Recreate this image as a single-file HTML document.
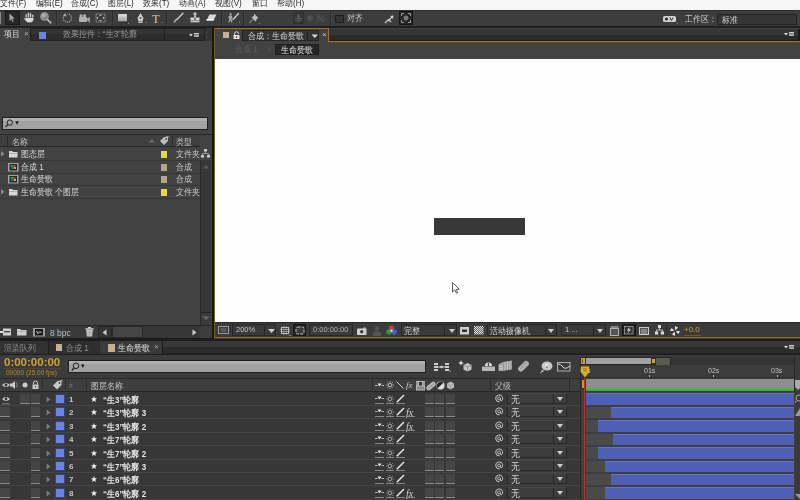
<!DOCTYPE html>
<html><head><meta charset="utf-8">
<style>
*{margin:0;padding:0;box-sizing:border-box}
html,body{width:800px;height:500px;overflow:hidden;background:#1c1c1c;font-family:"Liberation Sans",sans-serif;font-size:8px;color:#c8c8c8}
.a{position:absolute}
.t{position:absolute;white-space:nowrap;line-height:8px;will-change:transform}
svg{position:absolute;overflow:visible}
</style></head><body>
<div class="a" style="left:0px;top:0px;width:800px;height:10px;background:#f6f6f6;"></div>
<div class="t" style="left:0px;top:-1px;font-size:8px;color:#2a2a2a;transform:scaleY(1.14);transform-origin:0 0;">文件(F)</div>
<div class="t" style="left:36px;top:-1px;font-size:8px;color:#2a2a2a;transform:scaleY(1.14);transform-origin:0 0;">编辑(E)</div>
<div class="t" style="left:71px;top:-1px;font-size:8px;color:#2a2a2a;transform:scaleY(1.14);transform-origin:0 0;">合成(C)</div>
<div class="t" style="left:108px;top:-1px;font-size:8px;color:#2a2a2a;transform:scaleY(1.14);transform-origin:0 0;">图层(L)</div>
<div class="t" style="left:143px;top:-1px;font-size:8px;color:#2a2a2a;transform:scaleY(1.14);transform-origin:0 0;">效果(T)</div>
<div class="t" style="left:179px;top:-1px;font-size:8px;color:#2a2a2a;transform:scaleY(1.14);transform-origin:0 0;">动画(A)</div>
<div class="t" style="left:215px;top:-1px;font-size:8px;color:#2a2a2a;transform:scaleY(1.14);transform-origin:0 0;">视图(V)</div>
<div class="t" style="left:252px;top:-1px;font-size:8px;color:#2a2a2a;transform:scaleY(1.14);transform-origin:0 0;">窗口</div>
<div class="t" style="left:277px;top:-1px;font-size:8px;color:#2a2a2a;transform:scaleY(1.14);transform-origin:0 0;">帮助(H)</div>
<div class="a" style="left:0px;top:10px;width:800px;height:16px;background:#3d3d3d;"></div>
<div class="a" style="left:0px;top:10px;width:800px;height:1px;background:#2c2c2c;"></div>
<div class="a" style="left:0px;top:26px;width:800px;height:2px;background:#1f1f1f;"></div>
<div class="a" style="left:0px;top:12px;width:1px;height:12px;background:#8a8a8a;"></div>
<div class="a" style="left:5px;top:11px;width:15px;height:14px;background:#262626;border:1px solid #1a1a1a"></div>
<svg style="left:9px;top:13px;" width="6" height="10" viewBox="0 0 6 10"><path d="M0.5 0.5 L0.5 8 L2.2 6.3 L3.6 9.3 L4.6 8.8 L3.3 5.8 L5.6 5.6 Z" fill="#a8a8a8"/></svg>
<svg style="left:23px;top:12px;" width="12" height="11" viewBox="0 0 12 11"><g fill="#dcdcdc" stroke="#1e1e1e" stroke-width="0.5"><rect x="2.2" y="1.8" width="2" height="6" rx="1"/><rect x="4.4" y="0.4" width="2" height="7" rx="1"/><rect x="6.6" y="0.8" width="2" height="7" rx="1"/><rect x="8.8" y="2.2" width="2" height="6" rx="1"/><path d="M0.3 5.8 Q1.2 5 2.4 6.5 L2.4 5.5 L10.8 5.5 L10.8 7.5 Q10.5 10.5 7 10.8 L5 10.8 Q3 10.5 0.3 5.8Z"/></g></svg>
<svg style="left:40px;top:12px;" width="12" height="12" viewBox="0 0 12 12"><defs><radialGradient id="mg" cx="0.4" cy="0.35" r="0.7"><stop offset="0" stop-color="#bdbdbd"/><stop offset="1" stop-color="#5e5e5e"/></radialGradient></defs><circle cx="4.5" cy="4.5" r="3.7" fill="url(#mg)" stroke="#a8a8a8" stroke-width="1.1"/><path d="M7.3 7.3 L10.8 10.8" stroke="#b8b8b8" stroke-width="1.7" stroke-linecap="round"/></svg>
<div class="a" style="left:56px;top:11px;width:1px;height:14px;background:#2a2a2a;"></div>
<div class="a" style="left:57px;top:11px;width:1px;height:14px;background:#444;"></div>
<svg style="left:62px;top:13px;" width="11" height="10" viewBox="0 0 11 10"><path d="M2 2.5 A4.2 4.2 0 1 0 5.5 0.8" fill="none" stroke="#9a9a9a" stroke-width="1.2" stroke-dasharray="1.3 0.8"/><path d="M3.5 0 L1 2.8 L4.5 3.5 Z" fill="#aaa"/></svg>
<svg style="left:79px;top:14px;" width="12" height="10" viewBox="0 0 12 10"><rect x="0" y="3" width="8" height="5" rx="1" fill="#b0b0b0"/><circle cx="2" cy="1.8" r="1.6" fill="#b0b0b0"/><circle cx="5.5" cy="1.8" r="1.6" fill="#b0b0b0"/><path d="M8 4.5 L11 3 L11 8 L8 6.5Z" fill="#a0a0a0"/><path d="M10 9 L11 9 L11 8Z" fill="#ddd"/></svg>
<svg style="left:95px;top:13px;" width="12" height="10" viewBox="0 0 12 10"><rect x="1" y="1" width="9" height="8" fill="none" stroke="#999" stroke-width="1" stroke-dasharray="1.5 1"/><path d="M5.5 1.5 L4 3 L7 3Z M5.5 8.5 L4 7 L7 7Z M1.5 5 L3 3.5 L3 6.5Z M9.5 5 L8 3.5 L8 6.5Z" fill="#bbb"/></svg>
<div class="a" style="left:112px;top:11px;width:1px;height:14px;background:#2a2a2a;"></div>
<div class="a" style="left:113px;top:11px;width:1px;height:14px;background:#444;"></div>
<svg style="left:118px;top:14px;" width="11" height="11" viewBox="0 0 11 11"><defs><linearGradient id="gr" x1="0" y1="0" x2="0" y2="1"><stop offset="0" stop-color="#e0e0e0"/><stop offset="1" stop-color="#9a9a9a"/></linearGradient></defs><rect x="0" y="0" width="9" height="8" rx="0.8" fill="url(#gr)"/><rect x="0" y="7.5" width="9" height="1" fill="#222"/><path d="M10 10 L11 10 L11 9Z" fill="#ddd"/></svg>
<svg style="left:136px;top:13px;" width="11" height="11" viewBox="0 0 11 11"><path d="M4.5 0 L7.5 5 L6.5 8 L2.5 8 L1.5 5 Z" fill="#cfcfcf"/><circle cx="4.5" cy="5" r="1" fill="#555"/><rect x="2.3" y="8.3" width="4.4" height="1.7" fill="#bbb"/><path d="M9.5 10 L10.5 10 L10.5 9Z" fill="#ddd"/></svg>
<svg style="left:152px;top:13px;" width="11" height="11" viewBox="0 0 11 11"><text x="0" y="9.5" font-family="Liberation Serif" font-size="12.5" fill="#c4c4c4">T</text><path d="M9.5 10 L10.5 10 L10.5 9Z" fill="#ddd"/></svg>
<div class="a" style="left:166px;top:11px;width:1px;height:14px;background:#2a2a2a;"></div>
<div class="a" style="left:167px;top:11px;width:1px;height:14px;background:#444;"></div>
<svg style="left:173px;top:13px;" width="11" height="10" viewBox="0 0 11 10"><path d="M10 0.3 L4 6.5" stroke="#c8c8c8" stroke-width="1.5" stroke-linecap="round"/><path d="M4.5 5.5 L1 9.5 L2.5 7 Z" fill="#aaa" stroke="#aaa" stroke-width="1.2"/></svg>
<svg style="left:190px;top:12px;" width="11" height="11" viewBox="0 0 11 11"><circle cx="5" cy="2" r="1.7" fill="#c0c0c0"/><rect x="4" y="3.5" width="2" height="2" fill="#bbb"/><rect x="0.5" y="5.5" width="9" height="3" fill="#d8d8d8"/><path d="M3.5 6.5 L6.5 6.5 L5 8Z" fill="#222"/><rect x="0.5" y="9" width="9" height="1.3" fill="#cfcfcf"/></svg>
<svg style="left:206px;top:14px;" width="11" height="8" viewBox="0 0 11 8"><path d="M3.5 0.5 L10.5 0.5 L7.5 6.5 L0.5 6.5 Z" fill="#d8d8d8"/><path d="M0.5 5 L7.8 5 L7.5 6.5 L0.5 6.5Z" fill="#fff"/></svg>
<div class="a" style="left:221px;top:11px;width:1px;height:14px;background:#2a2a2a;"></div>
<div class="a" style="left:222px;top:11px;width:1px;height:14px;background:#444;"></div>
<svg style="left:227px;top:13px;" width="14" height="11" viewBox="0 0 14 11"><circle cx="3.6" cy="1.2" r="1.1" fill="#aaa"/><path d="M2.5 2.5 L4.8 2.5 L5.5 5 L4.5 5.5 L5.5 9.5 L4.3 9.5 L3.5 7 L2.3 9.5 L1.2 9.5 L2.5 5.5 L1 4.5Z" fill="#a8a8a8"/><path d="M11.5 0.5 L6 6.5" stroke="#cfcfcf" stroke-width="1.4" stroke-linecap="round"/><path d="M12 9.5 L13 9.5 L13 8.5Z" fill="#ddd"/></svg>
<div class="a" style="left:243px;top:11px;width:1px;height:14px;background:#2a2a2a;"></div>
<div class="a" style="left:244px;top:11px;width:1px;height:14px;background:#444;"></div>
<svg style="left:249px;top:13px;" width="12" height="11" viewBox="0 0 12 11"><path d="M5 0.5 L9.5 5 L8.2 5.6 L6.5 8.5 L2.5 4.5 L5 2.8 Z" fill="#bcbcbc"/><path d="M3.8 6.5 L0.5 9.8" stroke="#aaa" stroke-width="1"/><path d="M10 10.5 L11 10.5 L11 9.5Z" fill="#ddd"/></svg>
<div class="a" style="left:293px;top:12px;width:11px;height:12px;background:#363636;border:1px solid #303030"></div>
<svg style="left:294px;top:13px;" width="9" height="10" viewBox="0 0 9 10"><path d="M4.5 1 L4.5 9 M1 5.5 L8 5.5" stroke="#5a5a5a" stroke-width="1"/><circle cx="4.5" cy="3" r="1.5" fill="#5a5a5a"/><path d="M1.5 7 Q4.5 10 7.5 7" stroke="#5a5a5a" fill="none"/></svg>
<svg style="left:306px;top:14px;" width="8" height="8" viewBox="0 0 8 8"><circle cx="4" cy="4" r="3.2" fill="#4c4c4c"/><circle cx="3.5" cy="3.5" r="1.5" fill="#555"/></svg>
<svg style="left:317px;top:13px;" width="7" height="10" viewBox="0 0 7 10"><path d="M1 9 L1 2 M6 9 L6 2 M1 2 L6 9" stroke="#505050" stroke-width="1.3"/></svg>
<div class="a" style="left:330px;top:11px;width:1px;height:14px;background:#2a2a2a;"></div>
<div class="a" style="left:331px;top:11px;width:1px;height:14px;background:#444;"></div>
<div class="a" style="left:335px;top:15px;width:9px;height:8px;background:#343434;border:1px solid #1e1e2a"></div>
<div class="t" style="left:347px;top:14px;font-size:8px;color:#c8c8c8;transform:scaleY(1.14);transform-origin:0 0;">对齐</div>
<svg style="left:384px;top:15px;" width="10" height="9" viewBox="0 0 10 9"><path d="M1 8 L4.5 4.5 L7 7 M4 6 L9 1" stroke="#c8c8c8" stroke-width="1.2" fill="none"/><path d="M9.5 0.5 L6 1 L9 4Z" fill="#ccc"/></svg>
<div class="a" style="left:399px;top:11px;width:14px;height:14px;background:#262626;border:1px solid #161616"></div>
<svg style="left:401px;top:13px;" width="10" height="10" viewBox="0 0 10 10"><path d="M0.5 3 L0.5 0.5 L3 0.5 M7 0.5 L9.5 0.5 L9.5 3 M9.5 7 L9.5 9.5 L7 9.5 M3 9.5 L0.5 9.5 L0.5 7" stroke="#9a9a9a" stroke-width="1" fill="none"/><circle cx="5" cy="5" r="2" fill="none" stroke="#999" stroke-width="0.9"/><path d="M5 3 L5 7 M3 5 L7 5" stroke="#999" stroke-width="0.8"/></svg>
<svg style="left:663px;top:16px;" width="15" height="8" viewBox="0 0 15 8"><rect x="0" y="0" width="13" height="6" rx="1.5" fill="#d0d0d0"/><circle cx="3.5" cy="3" r="1.6" fill="#333"/><path d="M7 1.5 L8.5 4.5 L10 1.5" stroke="#333" stroke-width="1" fill="none"/><path d="M13.5 7.5 L14.5 7.5 L14.5 6.5Z" fill="#ddd"/></svg>
<div class="t" style="left:685px;top:15px;font-size:8px;color:#c8c8c8;transform:scaleY(1.14);transform-origin:0 0;">工作区：</div>
<div class="a" style="left:717px;top:14px;width:80px;height:11px;background:#353535;border:1px solid #222"></div>
<div class="a" style="left:796px;top:14px;width:4px;height:11px;background:#3e3e3e;border-left:1px solid #222"></div>
<div class="t" style="left:722px;top:16px;font-size:8px;color:#cfcfcf;transform:scaleY(1.14);transform-origin:0 0;">标准</div>
<div class="a" style="left:0px;top:28px;width:212px;height:13px;background:#2e2e2e;"></div>
<div class="a" style="left:0px;top:28px;width:30px;height:13px;background:#424242;"></div>
<div class="t" style="left:4px;top:30px;font-size:8px;color:#d8d8d8;transform:scaleY(1.14);transform-origin:0 0;">项目</div>
<div class="t" style="left:24px;top:30px;font-size:8px;color:#bbb;">×</div>
<div class="a" style="left:30px;top:28px;width:135px;height:13px;background:#202020;"></div>
<div class="a" style="left:31px;top:29px;width:133px;height:11px;background:#2c2c2c;"></div>
<div class="a" style="left:31px;top:29px;width:133px;height:5px;background:#343434;"></div>
<div class="a" style="left:39px;top:32px;width:7px;height:7px;background:#6a82e8;"></div>
<div class="t" style="left:63px;top:30px;font-size:8px;color:#9a9a9a;transform:scaleY(1.14);transform-origin:0 0;">效果控件：“生3”轮廓</div>
<div class="a" style="left:164px;top:28px;width:41px;height:13px;background:#202020;"></div>
<div class="a" style="left:165px;top:29px;width:39px;height:11px;background:#2c2c2c;"></div>
<div class="a" style="left:165px;top:29px;width:39px;height:5px;background:#363636;"></div>
<svg style="left:189px;top:33px;" width="11" height="6" viewBox="0 0 11 6"><path d="M0 1 L4 1 L2 3.5Z" fill="#ddd"/><rect x="5" y="0" width="5" height="1.5" fill="#ccc"/><rect x="5" y="2.3" width="5" height="1.5" fill="#ccc"/></svg>
<div class="a" style="left:204px;top:28px;width:8px;height:13px;background:#333;border-left:1px solid #222"></div>
<svg style="left:206px;top:31px;" width="4" height="8" viewBox="0 0 4 8"><circle cx="1" cy="1" r="0.6" fill="#666"/><circle cx="1" cy="6" r="0.6" fill="#666"/></svg>
<div class="a" style="left:212px;top:28px;width:2px;height:312px;background:#151515;"></div>
<div class="a" style="left:211px;top:41px;width:1px;height:285px;background:#4a4a4a;"></div>
<div class="a" style="left:0px;top:41px;width:212px;height:285px;background:#424242;"></div>
<div class="a" style="left:2px;top:117px;width:206px;height:13px;background:#1f1f1f;"></div>
<div class="a" style="left:3px;top:118px;width:204px;height:11px;background:#a2a2a2;"></div>
<div class="a" style="left:3px;top:118px;width:204px;height:3px;background:#b0b0b0;"></div>
<svg style="left:5px;top:119px;" width="14" height="9" viewBox="0 0 14 9"><circle cx="4.8" cy="3.6" r="2.7" fill="none" stroke="#222" stroke-width="1"/><path d="M2.8 5.6 L0.6 8" stroke="#222" stroke-width="1.3"/><path d="M10.3 2.3 L13.8 2.3 L12.05 5.8Z" fill="#1a1a1a"/></svg>
<div class="a" style="left:0px;top:134px;width:212px;height:1px;background:#262626;"></div>
<div class="a" style="left:0px;top:135px;width:200px;height:12px;background:#3f3f3f;"></div>
<div class="a" style="left:0px;top:146px;width:200px;height:1px;background:#262626;"></div>
<div class="a" style="left:7px;top:136px;width:1px;height:10px;background:#2c2c2c;"></div>
<div class="t" style="left:12px;top:138px;font-size:8px;color:#c4c4c4;transform:scaleY(1.14);transform-origin:0 0;">名称</div>
<svg style="left:148px;top:138px;" width="8" height="5" viewBox="0 0 8 5"><path d="M0.5 4.5 L3.8 1 L7 4.5Z" fill="#6a6a6a"/></svg>
<svg style="left:159px;top:136px;" width="11" height="10" viewBox="0 0 11 10"><path d="M1 5 L5 1 L9 1 L9 5 L5 9Z" fill="#bcbcbc"/><circle cx="7.2" cy="2.8" r="0.9" fill="#3f3f3f"/><path d="M7 1 Q9.5 -1 10 1.5" stroke="#bcbcbc" stroke-width="0.8" fill="none"/></svg>
<div class="a" style="left:172px;top:136px;width:1px;height:10px;background:#2c2c2c;"></div>
<div class="t" style="left:176px;top:138px;font-size:8px;color:#c4c4c4;transform:scaleY(1.14);transform-origin:0 0;">类型</div>
<div class="a" style="left:0px;top:160px;width:200px;height:1px;background:#373737;"></div>
<svg style="left:1px;top:151px;" width="4" height="6" viewBox="0 0 4 6"><path d="M0 0 L3.5 2.7 L0 5.4Z" fill="#8a8a8a"/></svg>
<svg style="left:9px;top:150px;" width="9" height="8" viewBox="0 0 9 8"><path d="M0 1 L3 1 L4 2 L8.5 2 L8.5 7.5 L0 7.5Z" fill="#d8d8d8"/><rect x="0" y="3" width="8.5" height="0.6" fill="#999"/></svg>
<div class="t" style="left:21px;top:150px;font-size:8px;color:#dadada;transform:scaleY(1.14);transform-origin:0 0;">图态层</div>
<div class="a" style="left:161px;top:151px;width:6px;height:7px;background:#e3d94a;"></div>
<div class="t" style="left:176px;top:150px;font-size:8px;color:#c8c8c8;transform:scaleY(1.14);transform-origin:0 0;">文件夹</div>
<div class="a" style="left:0px;top:173px;width:200px;height:1px;background:#373737;"></div>
<svg style="left:8px;top:163px;" width="11" height="9" viewBox="0 0 11 9"><rect x="0" y="0" width="10.5" height="8.5" fill="#a0a0a0"/><rect x="1.5" y="1" width="7.5" height="6.5" fill="#1e2a2a"/><rect x="2.5" y="2" width="2.5" height="2" fill="#2f8a3a"/><rect x="5" y="2" width="2.5" height="2" fill="#c03a2a"/><rect x="3" y="4" width="3" height="2" fill="#2a5ac0"/><rect x="6" y="4" width="2" height="2" fill="#d0b020"/></svg>
<div class="t" style="left:21px;top:163px;font-size:8px;color:#dadada;transform:scaleY(1.14);transform-origin:0 0;">合成 1</div>
<div class="a" style="left:161px;top:164px;width:6px;height:7px;background:#b6a686;"></div>
<div class="t" style="left:176px;top:163px;font-size:8px;color:#c8c8c8;transform:scaleY(1.14);transform-origin:0 0;">合成</div>
<div class="a" style="left:0px;top:185px;width:200px;height:1px;background:#373737;"></div>
<svg style="left:8px;top:175px;" width="11" height="9" viewBox="0 0 11 9"><rect x="0" y="0" width="10.5" height="8.5" fill="#a0a0a0"/><rect x="1.5" y="1" width="7.5" height="6.5" fill="#1e2a2a"/><rect x="2.5" y="2" width="2.5" height="2" fill="#2f8a3a"/><rect x="5" y="2" width="2.5" height="2" fill="#c03a2a"/><rect x="3" y="4" width="3" height="2" fill="#2a5ac0"/><rect x="6" y="4" width="2" height="2" fill="#d0b020"/></svg>
<div class="t" style="left:21px;top:175px;font-size:8px;color:#dadada;transform:scaleY(1.14);transform-origin:0 0;">生命赞歌</div>
<div class="a" style="left:161px;top:176px;width:6px;height:7px;background:#b6a686;"></div>
<div class="t" style="left:176px;top:175px;font-size:8px;color:#c8c8c8;transform:scaleY(1.14);transform-origin:0 0;">合成</div>
<div class="a" style="left:0px;top:198px;width:200px;height:1px;background:#373737;"></div>
<svg style="left:1px;top:189px;" width="4" height="6" viewBox="0 0 4 6"><path d="M0 0 L3.5 2.7 L0 5.4Z" fill="#8a8a8a"/></svg>
<svg style="left:9px;top:188px;" width="9" height="8" viewBox="0 0 9 8"><path d="M0 1 L3 1 L4 2 L8.5 2 L8.5 7.5 L0 7.5Z" fill="#d8d8d8"/><rect x="0" y="3" width="8.5" height="0.6" fill="#999"/></svg>
<div class="t" style="left:21px;top:188px;font-size:8px;color:#dadada;transform:scaleY(1.14);transform-origin:0 0;">生命赞歌 个图层</div>
<div class="a" style="left:161px;top:189px;width:6px;height:7px;background:#e3d94a;"></div>
<div class="t" style="left:176px;top:188px;font-size:8px;color:#c8c8c8;transform:scaleY(1.14);transform-origin:0 0;">文件夹</div>
<div class="a" style="left:200px;top:147px;width:12px;height:13px;background:#424242;"></div>
<svg style="left:201px;top:149px;" width="9" height="9" viewBox="0 0 9 9"><rect x="3" y="0" width="3" height="2.5" fill="#ccc"/><path d="M4.5 2.5 L4.5 4.5 M1.5 6 L1.5 4.5 L7.5 4.5 L7.5 6" stroke="#aaa" stroke-width="0.8" fill="none"/><rect x="0" y="6" width="3" height="2.5" fill="#ccc"/><rect x="6" y="6" width="3" height="2.5" fill="#ccc"/></svg>
<div class="a" style="left:200px;top:160px;width:11px;height:166px;background:#363636;border-left:1px solid #2a2a33"></div>
<svg style="left:202px;top:164px;" width="8" height="5" viewBox="0 0 8 5"><path d="M0.5 4.5 L4 1 L7.5 4.5Z" fill="#5a5a5a"/></svg>
<svg style="left:202px;top:316px;" width="8" height="5" viewBox="0 0 8 5"><path d="M0.5 0.5 L4 4 L7.5 0.5Z" fill="#5a5a5a"/></svg>
<div class="a" style="left:200px;top:312px;width:11px;height:14px;background:#3a3a3a;border-top:1px solid #222;border-left:1px solid #2a2a33"></div>
<svg style="left:202px;top:316px;" width="8" height="5" viewBox="0 0 8 5"><path d="M0.5 0.5 L4 4 L7.5 0.5Z" fill="#6a6a6a"/></svg>
<div class="a" style="left:0px;top:325px;width:212px;height:1px;background:#262626;"></div>
<div class="a" style="left:0px;top:326px;width:212px;height:12px;background:#3a3a3a;"></div>
<div class="a" style="left:0px;top:338px;width:800px;height:3px;background:#1c1c1c;"></div>
<svg style="left:0px;top:328px;" width="12" height="9" viewBox="0 0 12 9"><rect x="0" y="3" width="4" height="2" fill="#ddd"/><rect x="3" y="0.5" width="8" height="7" fill="#d0d0d0"/><rect x="4" y="3" width="6" height="1.4" fill="#444"/></svg>
<svg style="left:17px;top:328px;" width="10" height="8" viewBox="0 0 10 8"><path d="M0 1 L3 1 L4 2 L9.5 2 L9.5 7.5 L0 7.5Z" fill="#cfcfcf"/><rect x="0" y="3" width="9.5" height="0.6" fill="#999"/></svg>
<svg style="left:33px;top:328px;" width="13" height="9" viewBox="0 0 13 9"><rect x="0" y="0" width="12" height="8.5" fill="#9a9a9a"/><rect x="2" y="1" width="8" height="6.5" fill="#1a1a1a"/><path d="M3.5 3 L5 5.5 L7 3.5 L8.5 5" stroke="#ddd" stroke-width="1" fill="none"/></svg>
<div class="t" style="left:50px;top:329px;font-size:8.5px;color:#b4bcc4;font-family:Liberation Sans">8 bpc</div>
<svg style="left:85px;top:327px;" width="9" height="10" viewBox="0 0 9 10"><rect x="3" y="0" width="3" height="1.2" fill="#ccc"/><rect x="0.5" y="1.2" width="8" height="1.5" fill="#d0d0d0"/><path d="M1.2 3 L7.8 3 L7.2 9.5 L1.8 9.5Z" fill="#c8c8c8"/><path d="M3 4 L3 8.5 M4.5 4 L4.5 8.5 M6 4 L6 8.5" stroke="#9a9a9a" stroke-width="0.6"/></svg>
<div class="a" style="left:98px;top:326px;width:14px;height:12px;background:#343434;border:1px solid #262630"></div>
<svg style="left:102px;top:329px;" width="5" height="7" viewBox="0 0 5 7"><path d="M4.5 0.5 L0.5 3.5 L4.5 6.5Z" fill="#cfcfcf"/></svg>
<div class="a" style="left:112px;top:326px;width:31px;height:12px;background:#454545;border:1px solid #2a2a2a"></div>
<div class="a" style="left:143px;top:326px;width:56px;height:12px;background:#363636;"></div>
<svg style="left:192px;top:329px;" width="5" height="7" viewBox="0 0 5 7"><path d="M0.5 0.5 L4.5 3.5 L0.5 6.5Z" fill="#cfcfcf"/></svg>
<div class="a" style="left:200px;top:326px;width:12px;height:12px;background:#3c3c3c;"></div>
<div class="a" style="left:214px;top:28px;width:586px;height:311px;background:#424242;"></div>
<div class="a" style="left:214px;top:28px;width:115px;height:1px;background:#9a7428;"></div>
<div class="a" style="left:214px;top:28px;width:1px;height:311px;background:#765a22;"></div>
<div class="a" style="left:328px;top:28px;width:1px;height:14px;background:#9a7428;"></div>
<div class="a" style="left:328px;top:41px;width:472px;height:1px;background:#9a7428;"></div>
<div class="a" style="left:328px;top:42px;width:472px;height:1px;background:#5e4c2c;"></div>
<div class="a" style="left:214px;top:337px;width:586px;height:1px;background:#8a6a2a;"></div>
<div class="a" style="left:214px;top:338px;width:586px;height:1px;background:#4a3e26;"></div>
<div class="a" style="left:329px;top:29px;width:471px;height:12px;background:#2a2a2a;"></div>
<div class="a" style="left:329px;top:29px;width:471px;height:6px;background:#363636;"></div>
<div class="a" style="left:329px;top:40px;width:471px;height:1px;background:#1e1e24;"></div>
<div class="a" style="left:798px;top:29px;width:2px;height:12px;background:#1c1c1c;"></div>
<svg style="left:784px;top:32px;" width="10" height="6" viewBox="0 0 10 6"><path d="M0 1 L4 1 L2 3.5Z" fill="#ddd"/><rect x="5" y="0" width="5" height="1.5" fill="#ccc"/><rect x="5" y="2.3" width="5" height="1.5" fill="#ccc"/></svg>
<svg style="left:217px;top:30px;" width="3" height="8" viewBox="0 0 3 8"><circle cx="1" cy="1" r="0.6" fill="#666"/><circle cx="1" cy="5" r="0.6" fill="#666"/></svg>
<div class="a" style="left:223px;top:32px;width:6px;height:6px;background:#c4b08a;"></div>
<svg style="left:233px;top:32px;" width="7" height="7" viewBox="0 0 7 7"><path d="M1.5 3 L1.5 1.8 A2 2 0 0 1 5.5 1.8" stroke="#ddd" stroke-width="1" fill="none"/><rect x="0.5" y="3" width="6" height="4" fill="#e0e0e0"/><rect x="3" y="4.3" width="1" height="1.5" fill="#333"/></svg>
<div class="a" style="left:242px;top:30px;width:77px;height:11px;background:#343434;border:1px solid #252525"></div>
<div class="t" style="left:248px;top:32px;font-size:8px;color:#d8d8d8;transform:scaleY(1.14);transform-origin:0 0;">合成：生命赞歌</div>
<div class="a" style="left:307px;top:31px;width:1px;height:9px;background:#262626;"></div>
<svg style="left:311px;top:34px;" width="8" height="5" viewBox="0 0 8 5"><path d="M0.5 0.5 L7 0.5 L3.75 4Z" fill="#d8d8d8"/></svg>
<div class="t" style="left:322px;top:31px;font-size:8px;color:#c8c8c8;">×</div>
<div class="t" style="left:235px;top:45px;font-size:8px;color:#5e5e5e;transform:scaleY(1.14);transform-origin:0 0;">合成 1</div>
<svg style="left:267px;top:46px;" width="4" height="6" viewBox="0 0 4 6"><path d="M3.5 0 L0.5 3 L3.5 6Z" fill="#4e4e4e"/></svg>
<div class="a" style="left:275px;top:44px;width:44px;height:11px;background:#262626;border:1px solid #1e1e1e"></div>
<div class="t" style="left:281px;top:46px;font-size:8px;color:#e6e6e6;transform:scaleY(1.14);transform-origin:0 0;">生命赞歌</div>
<div class="a" style="left:215px;top:59px;width:585px;height:263px;background:#fefefe;"></div>
<div class="a" style="left:434px;top:218px;width:91px;height:17px;background:#383838;"></div>
<svg style="left:452px;top:282px;" width="8" height="12" viewBox="0 0 8 12"><path d="M0.5 0.5 L0.5 10 L2.8 7.8 L4.5 11.2 L5.8 10.6 L4.2 7.3 L7.3 7.3 Z" fill="#fff" stroke="#333" stroke-width="0.8"/></svg>
<div class="a" style="left:215px;top:322px;width:585px;height:15px;background:#3b3b3b;"></div>
<div class="a" style="left:215px;top:322px;width:585px;height:1px;background:#2a2a2a;"></div>
<svg style="left:218px;top:326px;" width="11" height="8" viewBox="0 0 11 8"><rect x="0.5" y="0.5" width="10" height="7" fill="none" stroke="#999" stroke-width="1"/><rect x="2.5" y="2" width="6" height="4" fill="#5a5a5a"/></svg>
<div class="a" style="left:232px;top:324px;width:44px;height:12px;background:#3a3a3a;border:1px solid #262630"></div>
<div class="t" style="left:236px;top:326px;font-size:7.5px;color:#c4c4c4;">200%</div>
<div class="a" style="left:264px;top:326px;width:1px;height:9px;background:#262626;"></div>
<svg style="left:268px;top:329px;" width="7" height="4" viewBox="0 0 7 4"><path d="M0 0 L7 0 L3.5 4Z" fill="#ccc"/></svg>
<svg style="left:280px;top:326px;" width="11" height="10" viewBox="0 0 11 10"><rect x="1.5" y="1.5" width="7" height="6" fill="none" stroke="#d0d0d0" stroke-width="0.9"/><path d="M0 3.5 L10 3.5 M0 5.5 L10 5.5 M3.8 0 L3.8 9 M6.2 0 L6.2 9" stroke="#bbb" stroke-width="0.6"/><path d="M9 8.5 L10.5 10" stroke="#ccc" stroke-width="0.8"/></svg>
<div class="a" style="left:293px;top:324px;width:13px;height:12px;background:#222;border:1px solid #151515"></div>
<svg style="left:295px;top:326px;" width="10" height="9" viewBox="0 0 10 9"><rect x="1" y="1" width="8" height="7" rx="1.5" fill="#3a3a3a" stroke="#c8c8c8" stroke-width="1" stroke-dasharray="3 1.2"/></svg>
<div class="a" style="left:309px;top:324px;width:44px;height:12px;background:#3a3a3a;border:1px solid #262626"></div>
<div class="t" style="left:313px;top:326px;font-size:7.5px;color:#b0b0b0;">0:00:00:00</div>
<svg style="left:357px;top:327px;" width="10" height="8" viewBox="0 0 10 8"><rect x="0" y="1.5" width="9.5" height="6.5" rx="0.8" fill="#d0d0d0"/><rect x="6.5" y="0.5" width="2" height="1.5" fill="#d0d0d0"/><circle cx="4.7" cy="4.8" r="1.8" fill="#444"/></svg>
<svg style="left:373px;top:326px;" width="8" height="10" viewBox="0 0 8 10"><circle cx="4" cy="2.5" r="2.2" fill="#555"/><path d="M0 10 L0 6.5 Q4 4 8 6.5 L8 10Z" fill="#555"/></svg>
<svg style="left:386px;top:325px;" width="11" height="11" viewBox="0 0 11 11"><circle cx="5.5" cy="3.2" r="2.8" fill="#c83a3a"/><circle cx="3" cy="7" r="2.8" fill="#2a9a3a"/><circle cx="8" cy="7" r="2.8" fill="#4a5ad0"/><circle cx="5.5" cy="5.8" r="1.2" fill="#ddd"/></svg>
<div class="a" style="left:401px;top:324px;width:56px;height:12px;background:#3a3a3a;border:1px solid #262626"></div>
<div class="t" style="left:404px;top:327px;font-size:8px;color:#d0d0d0;transform:scaleY(1.14);transform-origin:0 0;">完整</div>
<div class="a" style="left:444px;top:326px;width:1px;height:9px;background:#262626;"></div>
<svg style="left:449px;top:329px;" width="6" height="4" viewBox="0 0 6 4"><path d="M0 0 L6 0 L3 4Z" fill="#ccc"/></svg>
<svg style="left:460px;top:327px;" width="9" height="8" viewBox="0 0 9 8"><rect x="0" y="0" width="9" height="7.5" fill="#cfcfcf"/><rect x="2" y="2.5" width="5" height="2.5" fill="#333"/></svg>
<svg style="left:474px;top:326px;" width="10" height="9" viewBox="0 0 10 9"><defs><pattern id="ck" width="2" height="2" patternUnits="userSpaceOnUse"><rect width="1" height="1" fill="#ddd"/><rect x="1" y="1" width="1" height="1" fill="#ddd"/><rect x="1" width="1" height="1" fill="#666"/><rect y="1" width="1" height="1" fill="#666"/></pattern></defs><rect width="9.5" height="8.5" fill="url(#ck)"/></svg>
<div class="a" style="left:487px;top:324px;width:70px;height:12px;background:#3a3a3a;border:1px solid #262626"></div>
<div class="t" style="left:490px;top:327px;font-size:8px;color:#d0d0d0;transform:scaleY(1.14);transform-origin:0 0;">活动摄像机</div>
<div class="a" style="left:545px;top:326px;width:1px;height:9px;background:#262626;"></div>
<svg style="left:548px;top:329px;" width="6" height="4" viewBox="0 0 6 4"><path d="M0 0 L6 0 L3 4Z" fill="#ccc"/></svg>
<div class="a" style="left:561px;top:324px;width:45px;height:12px;background:#3a3a3a;border:1px solid #262630"></div>
<div class="t" style="left:565px;top:326px;font-size:7.5px;color:#c8c8c8;">1 ...</div>
<div class="a" style="left:593px;top:326px;width:1px;height:9px;background:#262626;"></div>
<svg style="left:597px;top:329px;" width="6" height="4" viewBox="0 0 6 4"><path d="M0 0 L6 0 L3 4Z" fill="#ccc"/></svg>
<svg style="left:610px;top:326px;" width="9" height="10" viewBox="0 0 9 10"><rect x="0.5" y="0.5" width="8" height="1" fill="#ccc"/><rect x="0.5" y="2.5" width="8" height="7" fill="#555" stroke="#bbb" stroke-width="0.9"/></svg>
<div class="a" style="left:622px;top:324px;width:14px;height:12px;background:#222;border:1px solid #151515"></div>
<svg style="left:624px;top:326px;" width="10" height="9" viewBox="0 0 10 9"><rect x="0.5" y="0.5" width="8.5" height="7.5" fill="#333" stroke="#999" stroke-width="0.8"/><path d="M5.5 1 L3 4.5 L5 4.5 L3.5 7.5 L7 3.5 L5 3.5Z" fill="#eee"/></svg>
<svg style="left:639px;top:327px;" width="10" height="8" viewBox="0 0 10 8"><rect x="0.5" y="0.5" width="9" height="7" fill="#555" stroke="#ccc" stroke-width="1"/><path d="M3 2 L3 7 M5 2 L5 7 M7 2 L7 7" stroke="#ccc" stroke-width="0.8"/></svg>
<svg style="left:655px;top:325px;" width="9" height="10" viewBox="0 0 9 10"><rect x="3" y="0" width="3" height="3" fill="#ddd"/><path d="M4.5 3 L4.5 5 M1.5 6.5 L1.5 5 L7.5 5 L7.5 6.5" stroke="#ccc" stroke-width="0.9" fill="none"/><rect x="0" y="6.5" width="3.2" height="3" fill="#ddd"/><rect x="5.8" y="6.5" width="3.2" height="3" fill="#ddd"/></svg>
<div class="a" style="left:666px;top:325px;width:1px;height:11px;background:#2a2a2a;"></div>
<svg style="left:670px;top:326px;" width="10" height="10" viewBox="0 0 10 10"><g fill="#ddd"><path d="M5 5 L5 0 L8 1.5Z"/><path d="M5 5 L10 5 L8.5 8Z"/><path d="M5 5 L5 10 L2 8.5Z"/><path d="M5 5 L0 5 L1.5 2Z"/></g><circle cx="5" cy="5" r="1.3" fill="#3b3b3b"/></svg>
<div class="t" style="left:684px;top:326px;font-size:8px;color:#c0a030;">+0.0</div>
<div class="a" style="left:684px;top:335px;width:17px;height:1px;background:#6a5a2a;"></div>
<div class="a" style="left:0px;top:341px;width:800px;height:13px;background:#2c2c2c;"></div>
<div class="a" style="left:163px;top:341px;width:637px;height:6px;background:#383838;"></div>
<div class="a" style="left:163px;top:353px;width:637px;height:1px;background:#22222a;"></div>
<div class="a" style="left:0px;top:341px;width:48px;height:13px;background:#323232;"></div>
<div class="t" style="left:4px;top:344px;font-size:8px;color:#8a8a8a;transform:scaleY(1.14);transform-origin:0 0;">渲染队列</div>
<div class="a" style="left:48px;top:341px;width:1px;height:13px;background:#1e1e1e;"></div>
<div class="a" style="left:49px;top:341px;width:50px;height:13px;background:#2e2e2e;"></div>
<div class="a" style="left:56px;top:344px;width:6px;height:7px;background:#c4b08a;"></div>
<div class="t" style="left:66px;top:344px;font-size:8px;color:#8e8e8e;transform:scaleY(1.14);transform-origin:0 0;">合成 1</div>
<div class="a" style="left:100px;top:341px;width:62px;height:13px;background:#3a3a3a;"></div>
<svg style="left:103px;top:343px;" width="3" height="8" viewBox="0 0 3 8"><circle cx="1" cy="1" r="0.6" fill="#666"/><circle cx="1" cy="5" r="0.6" fill="#666"/></svg>
<div class="a" style="left:108px;top:344px;width:7px;height:8px;background:#c4b08a;"></div>
<div class="t" style="left:118px;top:344px;font-size:8px;color:#e0e0e0;transform:scaleY(1.14);transform-origin:0 0;">生命赞歌</div>
<div class="t" style="left:154px;top:343px;font-size:8px;color:#aaa;">×</div>
<div class="a" style="left:162px;top:341px;width:1px;height:13px;background:#1e1e1e;"></div>
<svg style="left:784px;top:345px;" width="10" height="6" viewBox="0 0 10 6"><path d="M0 1 L4 1 L2 3.5Z" fill="#ddd"/><rect x="5" y="0" width="5" height="1.5" fill="#ccc"/><rect x="5" y="2.3" width="5" height="1.5" fill="#ccc"/></svg>
<div class="a" style="left:0px;top:354px;width:800px;height:146px;background:#3b3b3b;"></div>
<div class="a" style="left:0px;top:354px;width:800px;height:1px;background:#1e1e1e;"></div>
<div class="t" style="left:4px;top:357px;font-size:11.5px;color:#cfa22c;font-weight:bold;line-height:11px">0:00:00:00</div>
<div class="a" style="left:4px;top:368px;width:57px;height:1px;background:#5a4e30;opacity:.7"></div>
<div class="t" style="left:6px;top:370px;font-size:6.5px;color:#b08e2c;line-height:6px">00000 (25.00 fps)</div>
<div class="a" style="left:68px;top:360px;width:358px;height:13px;background:#1e1e1e;"></div>
<div class="a" style="left:69px;top:361px;width:356px;height:11px;background:#a2a2a2;"></div>
<div class="a" style="left:69px;top:361px;width:356px;height:3px;background:#b0b0b0;"></div>
<svg style="left:71px;top:362px;" width="14" height="9" viewBox="0 0 14 9"><circle cx="5" cy="3.8" r="2.8" fill="none" stroke="#222" stroke-width="1"/><path d="M3 6 L0.8 8.5" stroke="#222" stroke-width="1.3"/><path d="M10 2.5 L13.5 2.5 L11.75 6Z" fill="#1a1a1a"/></svg>
<svg style="left:434px;top:362px;" width="17" height="10" viewBox="0 0 17 10"><g fill="#ccc"><rect x="0" y="1" width="4" height="2"/><rect x="0" y="4" width="4" height="2"/><rect x="0" y="7" width="4" height="2"/><rect x="11" y="1" width="4" height="2"/><rect x="11" y="4" width="4" height="2"/><rect x="11" y="7" width="4" height="2"/></g><path d="M4 5 L11 5" stroke="#ccc" stroke-width="1"/><circle cx="7.5" cy="5" r="1.3" fill="#ccc"/><rect x="15.5" y="8.5" width="1" height="1" fill="#ddd"/></svg>
<svg style="left:458px;top:360px;" width="14" height="12" viewBox="0 0 14 12"><path d="M3 0 L3.7 2.3 L6 3 L3.7 3.7 L3 6 L2.3 3.7 L0 3 L2.3 2.3Z" fill="#f0f0f0"/><path d="M5.5 5 L9.5 3 L13.5 5 L13.5 9.5 L9.5 11.5 L5.5 9.5Z" fill="#c4c4c4"/><path d="M5.5 5 L9.5 7 L13.5 5 M9.5 7 L9.5 11.5" stroke="#7a7a7a" stroke-width="0.7" fill="none"/></svg>
<svg style="left:482px;top:361px;" width="13" height="11" viewBox="0 0 13 11"><path d="M3 5 A3.5 3.5 0 0 1 10 5Z" fill="#e0e0e0"/><rect x="5.8" y="2" width="1.4" height="3.5" fill="#555"/><rect x="0" y="5.5" width="13" height="4.5" fill="#b8b8b8"/></svg>
<svg style="left:498px;top:360px;" width="15" height="12" viewBox="0 0 15 12"><path d="M0.5 4.5 L5 2 L5 11 L0.5 11Z" fill="#a8a8a8"/><path d="M5 2 L14 0.5 L14 9.5 L5 11Z" fill="#999"/><path d="M7 2 L7 10.5 M9.5 1.5 L9.5 10 M12 1 L12 9.5 M1.5 6.5 L4.5 6.5 M1.5 8.5 L4.5 8.5" stroke="#d8d8d8" stroke-width="0.8"/></svg>
<svg style="left:517px;top:360px;" width="13" height="12" viewBox="0 0 13 12"><rect x="0" y="3.5" width="13" height="5.5" rx="2.75" transform="rotate(-45 6.5 6.25)" fill="#b0b0b0"/><path d="M3 9 L9.5 2.5" stroke="#8a8a8a" stroke-width="0.8"/></svg>
<svg style="left:540px;top:361px;" width="13" height="12" viewBox="0 0 13 12"><ellipse cx="7" cy="5" rx="5.5" ry="4.5" fill="#c8c8c8"/><circle cx="7" cy="4.5" r="1.5" fill="#fff"/><path d="M7 4.5 L7 7" stroke="#555" stroke-width="1"/><circle cx="2.5" cy="10" r="1.1" fill="#ccc"/><circle cx="1" cy="11.5" r="0.7" fill="#ccc"/></svg>
<svg style="left:557px;top:362px;" width="14" height="10" viewBox="0 0 14 10"><rect x="0.5" y="0.5" width="12.5" height="8.5" fill="none" stroke="#bbb" stroke-width="0.9"/><path d="M1 2 Q4 2 6 5 Q8 8 13 4" stroke="#ddd" stroke-width="1" fill="none"/></svg>
<div class="a" style="left:0px;top:378px;width:580px;height:1px;background:#2a2a2a;"></div>
<div class="a" style="left:0px;top:379px;width:580px;height:12px;background:#3e3e3e;"></div>
<div class="a" style="left:0px;top:391px;width:580px;height:1px;background:#262626;"></div>
<svg style="left:2px;top:382px;" width="8" height="6" viewBox="0 0 8 6"><path d="M0 3 Q4 -1 8 3 Q4 7 0 3Z" fill="#ccc"/><circle cx="4" cy="3" r="1.4" fill="#333"/></svg>
<svg style="left:10px;top:381px;" width="9" height="8" viewBox="0 0 9 8"><path d="M0 2.5 L2 2.5 L5 0 L5 8 L2 5.5 L0 5.5Z" fill="#ccc"/><path d="M6.5 1.5 Q8 4 6.5 6.5" stroke="#aaa" stroke-width="0.7" fill="none"/></svg>
<svg style="left:22px;top:382px;" width="6" height="6" viewBox="0 0 6 6"><circle cx="3" cy="3" r="2.5" fill="#ccc"/></svg>
<svg style="left:32px;top:381px;" width="7" height="8" viewBox="0 0 7 8"><path d="M1.5 3.5 L1.5 2 A2 2 0 0 1 5.5 2 L5.5 3.5" stroke="#ccc" stroke-width="1" fill="none"/><rect x="0.5" y="3.5" width="6" height="4.5" fill="#ccc"/><rect x="3" y="5" width="1" height="1.5" fill="#3e3e3e"/></svg>
<div class="a" style="left:42px;top:380px;width:1px;height:10px;background:#2c2c2c;"></div>
<svg style="left:52px;top:380px;" width="11" height="10" viewBox="0 0 11 10"><path d="M1 5.5 L5.5 1 L9.5 1 L9.5 5 L5 9.5Z" fill="#c8c8c8"/><circle cx="7.5" cy="3" r="0.9" fill="#3e3e3e"/><path d="M7.5 1 Q10 -1 10.5 1.5" stroke="#c8c8c8" stroke-width="0.8" fill="none"/></svg>
<div class="a" style="left:65px;top:380px;width:1px;height:10px;background:#2c2c2c;"></div>
<div class="t" style="left:69px;top:382px;font-size:7px;color:#777;">#</div>
<div class="a" style="left:86px;top:380px;width:1px;height:10px;background:#2c2c2c;"></div>
<div class="t" style="left:91px;top:382px;font-size:8px;color:#c8c8c8;transform:scaleY(1.14);transform-origin:0 0;">图层名称</div>
<div class="a" style="left:372px;top:380px;width:1px;height:10px;background:#2c2c2c;"></div>
<svg style="left:375px;top:382px;" width="9" height="6" viewBox="0 0 9 6"><path d="M0 3.5 L2.5 3.5 M6.5 3.5 L9 3.5" stroke="#ddd" stroke-width="0.8"/><path d="M2.5 1.5 L6.5 1.5 L4.5 4.5Z" fill="#eee"/></svg>
<svg style="left:386px;top:381px;" width="8" height="8" viewBox="0 0 8 8"><circle cx="4" cy="4" r="1.8" fill="none" stroke="#ccc" stroke-width="0.9"/><path d="M4 0 L4 1.5 M4 6.5 L4 8 M0 4 L1.5 4 M6.5 4 L8 4 M1.2 1.2 L2.2 2.2 M5.8 5.8 L6.8 6.8 M1.2 6.8 L2.2 5.8 M5.8 2.2 L6.8 1.2" stroke="#ccc" stroke-width="0.7"/></svg>
<svg style="left:396px;top:381px;" width="8" height="8" viewBox="0 0 8 8"><path d="M0.5 0.5 L7.5 7.5" stroke="#ccc" stroke-width="1"/></svg>
<div class="t" style="left:406px;top:381px;font-size:9px;color:#ccc;font-family:Liberation Serif;line-height:9px"><i>fx</i></div>
<svg style="left:416px;top:381px;" width="9" height="10" viewBox="0 0 9 10"><rect x="0" y="0" width="9" height="9.5" fill="#b8b8b8"/><rect x="3" y="1" width="3" height="3.5" fill="#333"/><rect x="1" y="5.5" width="7" height="3" fill="#888"/><path d="M1 1 L1 4.5 M8 1 L8 4.5" stroke="#666" stroke-width="0.8"/></svg>
<svg style="left:426px;top:381px;" width="10" height="10" viewBox="0 0 10 10"><rect x="-0.5" y="2.5" width="11" height="5" rx="2.5" transform="rotate(-40 5 5)" fill="#b4b4b4"/><path d="M2.5 7.5 L7.5 2.5" stroke="#7a7a7a" stroke-width="0.7"/></svg>
<svg style="left:436px;top:381px;" width="9" height="9" viewBox="0 0 9 9"><circle cx="4.5" cy="4.5" r="4" fill="#ddd"/><path d="M1.7 7.3 A4 4 0 0 1 7.3 1.7Z" fill="#222"/></svg>
<svg style="left:446px;top:381px;" width="9" height="9" viewBox="0 0 9 9"><path d="M1 2.5 L4.5 0.5 L8 2.5 L8 6.5 L4.5 8.5 L1 6.5Z" fill="#bbb"/><path d="M1 2.5 L4.5 4.5 L8 2.5 M4.5 4.5 L4.5 8.5" stroke="#888" stroke-width="0.6" fill="none"/></svg>
<div class="a" style="left:490px;top:380px;width:1px;height:10px;background:#2c2c2c;"></div>
<div class="t" style="left:495px;top:382px;font-size:8px;color:#c0c0c0;transform:scaleY(1.14);transform-origin:0 0;">父级</div>
<div class="a" style="left:569px;top:380px;width:1px;height:10px;background:#2c2c2c;"></div>
<div class="a" style="left:580px;top:357px;width:215px;height:21px;background:#3c3c3c;"></div>
<div class="a" style="left:580px;top:357px;width:91px;height:8px;background:#262626;"></div>
<div class="a" style="left:671px;top:357px;width:124px;height:8px;background:#353535;"></div>
<div class="a" style="left:586px;top:358px;width:65px;height:6px;background:#a2a2a2;"></div>
<div class="a" style="left:581px;top:358px;width:5px;height:6px;background:#d4a42a;border-right:1px solid #3a3020"></div>
<div class="a" style="left:582px;top:359px;width:1px;height:4px;background:#6a5420;"></div>
<div class="a" style="left:651px;top:358px;width:5px;height:6px;background:#d4a42a;border:1px solid #3a3020"></div>
<div class="a" style="left:656px;top:358px;width:14px;height:7px;background:#5a5a52;"></div>
<div class="t" style="left:583px;top:367px;font-size:7px;color:#c4c4c4;line-height:7px">0s</div>
<div class="t" style="left:644px;top:367px;font-size:7px;color:#c4c4c4;line-height:7px">01s</div>
<div class="t" style="left:708px;top:367px;font-size:7px;color:#c4c4c4;line-height:7px">02s</div>
<div class="t" style="left:771px;top:367px;font-size:7px;color:#c4c4c4;line-height:7px">03s</div>
<div class="a" style="left:649px;top:375px;width:1px;height:3px;background:#b0b0b0;"></div>
<div class="a" style="left:713px;top:375px;width:1px;height:3px;background:#b0b0b0;"></div>
<div class="a" style="left:777px;top:375px;width:1px;height:3px;background:#b0b0b0;"></div>
<div class="a" style="left:580px;top:377px;width:215px;height:1px;background:#2e2e2e;"></div>
<div class="a" style="left:580px;top:378px;width:215px;height:11px;background:#3c3c3c;"></div>
<div class="a" style="left:586px;top:379px;width:208px;height:10px;background:#8e8e8e;"></div>
<div class="a" style="left:581px;top:379px;width:5px;height:10px;background:#c89a28;border:1px solid #3a3020"></div>
<div class="a" style="left:585px;top:389px;width:209px;height:2px;background:#24c224;"></div>
<div class="a" style="left:569px;top:379px;width:1px;height:12px;background:#2c2c2c;"></div>
<div class="a" style="left:794px;top:357px;width:6px;height:143px;background:#3a3a3a;border-left:1px solid #262626"></div>
<svg style="left:795px;top:380px;" width="5" height="10" viewBox="0 0 5 10"><path d="M0 0 L5 0 L5 8 L3 10 L0 7Z" fill="#aaa"/></svg>
<svg style="left:795px;top:394px;" width="5" height="10" viewBox="0 0 5 10"><circle cx="4" cy="4" r="3" fill="none" stroke="#aaa" stroke-width="1"/><path d="M1 7 L0 9" stroke="#aaa"/></svg>
<svg style="left:795px;top:408px;" width="5" height="8" viewBox="0 0 5 8"><path d="M5 0 L5 8 L0 8Z" fill="#999"/></svg>
<svg style="left:795px;top:494px;" width="5" height="6" viewBox="0 0 5 6"><path d="M0 0 L5 0 L5 5Z" fill="#999"/></svg>
<div class="a" style="left:580px;top:357px;width:1px;height:143px;background:#2a2a2a;"></div>
<div class="a" style="left:0px;top:392px;width:580px;height:13px;background:#373737;"></div>
<div class="a" style="left:0px;top:405px;width:580px;height:1px;background:#454545;"></div>
<svg style="left:2px;top:396px;" width="8" height="9" viewBox="0 0 8 9"><path d="M0 3 Q4 -1 8 3 Q4 7 0 3Z" fill="#d0d0d0"/><circle cx="4" cy="3" r="1.4" fill="#333"/><rect x="0" y="7.5" width="8" height="0.8" fill="#999"/></svg>
<div class="a" style="left:20px;top:394px;width:10px;height:10px;background:#454545;border-bottom:1px solid #8a8a8a"></div>
<div class="a" style="left:31px;top:394px;width:9px;height:10px;background:#454545;border-bottom:1px solid #8a8a8a"></div>
<svg style="left:46px;top:396px;" width="5" height="7" viewBox="0 0 5 7"><path d="M0.5 0.5 L4.5 3.5 L0.5 6.5Z" fill="#7a7a7a"/></svg>
<div class="a" style="left:55px;top:394px;width:10px;height:10px;background:#6a84e6;border:1px solid #3a4470"></div>
<div class="t" style="left:69px;top:396px;font-size:8px;color:#c4c4c4;font-weight:bold">1</div>
<svg style="left:91px;top:396px;" width="6" height="6" viewBox="0 0 6 6"><path d="M3 0 L3.8 2.2 L6 2.3 L4.3 3.7 L4.9 6 L3 4.7 L1.1 6 L1.7 3.7 L0 2.3 L2.2 2.2Z" fill="#f0f0f0"/></svg>
<div class="t" style="left:103px;top:395.5px;font-size:8px;color:#e6e6e6;transform:scaleY(1.14);transform-origin:0 0;font-weight:bold">“生3”轮廓</div>
<svg style="left:375px;top:395px;" width="9" height="9" viewBox="0 0 9 9"><path d="M0 3.5 L2.5 3.5 M6.5 3.5 L9 3.5" stroke="#ddd" stroke-width="0.8"/><path d="M2.5 1.5 L6.5 1.5 L4.5 4.5Z" fill="#eee"/><rect x="0" y="8" width="9" height="1" fill="#888"/></svg>
<svg style="left:386px;top:395px;" width="8" height="9" viewBox="0 0 8 9"><circle cx="4" cy="4" r="1.8" fill="none" stroke="#bbb" stroke-width="0.8"/><path d="M4 0 L4 1.5 M4 6.5 L4 8 M0 4 L1.5 4 M6.5 4 L8 4 M1.2 1.2 L2.2 2.2 M5.8 5.8 L6.8 6.8 M1.2 6.8 L2.2 5.8 M5.8 2.2 L6.8 1.2" stroke="#bbb" stroke-width="0.6"/><rect x="0" y="8" width="8" height="1" fill="#888"/></svg>
<svg style="left:396px;top:394px;" width="9" height="10" viewBox="0 0 9 10"><path d="M0.8 8.2 L8 1" stroke="#e8e8e8" stroke-width="1.5"/><rect x="0" y="9" width="9" height="1" fill="#888"/></svg>
<div class="a" style="left:425px;top:394px;width:9px;height:10px;background:#454545;border-bottom:1px solid #8a8a8a"></div>
<div class="a" style="left:435px;top:394px;width:9px;height:10px;background:#454545;border-bottom:1px solid #8a8a8a"></div>
<div class="a" style="left:446px;top:394px;width:9px;height:10px;background:#454545;border-bottom:1px solid #8a8a8a"></div>
<svg style="left:495px;top:394px;" width="9" height="9" viewBox="0 0 9 9"><path d="M5.4 4.6 A1.4 1.4 0 1 1 5.4 4.4 L5.4 6 Q5.6 7.2 6.8 6.6 Q7.9 5.8 7.6 3.6 A3.5 3.5 0 1 0 4.5 7.9" stroke="#cfcfcf" stroke-width="0.95" fill="none"/></svg>
<div class="a" style="left:507px;top:393px;width:60px;height:11px;background:#3d3d3d;border:1px solid #2a2a2a;border-top-color:#464646"></div>
<div class="t" style="left:511px;top:395px;font-size:8.5px;color:#dedede;transform:scaleY(1.14);transform-origin:0 0;">无</div>
<div class="a" style="left:553px;top:394px;width:1px;height:9px;background:#262626;"></div>
<svg style="left:557px;top:397px;" width="6" height="4" viewBox="0 0 6 4"><path d="M0 0 L6 0 L3 4Z" fill="#ccc"/></svg>
<div class="a" style="left:581px;top:392px;width:214px;height:14px;background:#3e3e3e;"></div>
<div class="a" style="left:586px;top:393px;width:208px;height:12px;background:#4a4a4a;"></div>
<div class="a" style="left:585px;top:393px;width:209px;height:12px;background:#4f60b4;border-top:1px solid #6474c4"></div>
<div class="a" style="left:0px;top:406px;width:580px;height:12px;background:#373737;"></div>
<div class="a" style="left:0px;top:418px;width:580px;height:1px;background:#454545;"></div>
<div class="a" style="left:0px;top:407px;width:10px;height:10px;background:#454545;border-bottom:1px solid #8a8a8a"></div>
<div class="a" style="left:31px;top:407px;width:9px;height:10px;background:#454545;border-bottom:1px solid #8a8a8a"></div>
<svg style="left:46px;top:409px;" width="5" height="7" viewBox="0 0 5 7"><path d="M0.5 0.5 L4.5 3.5 L0.5 6.5Z" fill="#7a7a7a"/></svg>
<div class="a" style="left:55px;top:407px;width:10px;height:10px;background:#6a84e6;border:1px solid #3a4470"></div>
<div class="t" style="left:69px;top:409px;font-size:8px;color:#c4c4c4;font-weight:bold">2</div>
<svg style="left:91px;top:409px;" width="6" height="6" viewBox="0 0 6 6"><path d="M3 0 L3.8 2.2 L6 2.3 L4.3 3.7 L4.9 6 L3 4.7 L1.1 6 L1.7 3.7 L0 2.3 L2.2 2.2Z" fill="#f0f0f0"/></svg>
<div class="t" style="left:103px;top:408.5px;font-size:8px;color:#e6e6e6;transform:scaleY(1.14);transform-origin:0 0;font-weight:bold">“生3”轮廓 3</div>
<svg style="left:375px;top:408px;" width="9" height="9" viewBox="0 0 9 9"><path d="M0 3.5 L2.5 3.5 M6.5 3.5 L9 3.5" stroke="#ddd" stroke-width="0.8"/><path d="M2.5 1.5 L6.5 1.5 L4.5 4.5Z" fill="#eee"/><rect x="0" y="8" width="9" height="1" fill="#888"/></svg>
<svg style="left:386px;top:408px;" width="8" height="9" viewBox="0 0 8 9"><circle cx="4" cy="4" r="1.8" fill="none" stroke="#bbb" stroke-width="0.8"/><path d="M4 0 L4 1.5 M4 6.5 L4 8 M0 4 L1.5 4 M6.5 4 L8 4 M1.2 1.2 L2.2 2.2 M5.8 5.8 L6.8 6.8 M1.2 6.8 L2.2 5.8 M5.8 2.2 L6.8 1.2" stroke="#bbb" stroke-width="0.6"/><rect x="0" y="8" width="8" height="1" fill="#888"/></svg>
<svg style="left:396px;top:407px;" width="9" height="10" viewBox="0 0 9 10"><path d="M0.8 8.2 L8 1" stroke="#e8e8e8" stroke-width="1.5"/><rect x="0" y="9" width="9" height="1" fill="#888"/></svg>
<div class="t" style="left:406px;top:408px;font-size:10px;color:#d0d0d0;font-family:Liberation Serif;line-height:9px"><i>fx</i></div>
<div class="a" style="left:406px;top:416px;width:9px;height:1px;background:#888;"></div>
<div class="a" style="left:425px;top:407px;width:9px;height:10px;background:#454545;border-bottom:1px solid #8a8a8a"></div>
<div class="a" style="left:435px;top:407px;width:9px;height:10px;background:#454545;border-bottom:1px solid #8a8a8a"></div>
<div class="a" style="left:446px;top:407px;width:9px;height:10px;background:#454545;border-bottom:1px solid #8a8a8a"></div>
<svg style="left:495px;top:407px;" width="9" height="9" viewBox="0 0 9 9"><path d="M5.4 4.6 A1.4 1.4 0 1 1 5.4 4.4 L5.4 6 Q5.6 7.2 6.8 6.6 Q7.9 5.8 7.6 3.6 A3.5 3.5 0 1 0 4.5 7.9" stroke="#cfcfcf" stroke-width="0.95" fill="none"/></svg>
<div class="a" style="left:507px;top:406px;width:60px;height:11px;background:#3d3d3d;border:1px solid #2a2a2a;border-top-color:#464646"></div>
<div class="t" style="left:511px;top:408px;font-size:8.5px;color:#dedede;transform:scaleY(1.14);transform-origin:0 0;">无</div>
<div class="a" style="left:553px;top:407px;width:1px;height:9px;background:#262626;"></div>
<svg style="left:557px;top:410px;" width="6" height="4" viewBox="0 0 6 4"><path d="M0 0 L6 0 L3 4Z" fill="#ccc"/></svg>
<div class="a" style="left:581px;top:406px;width:214px;height:13px;background:#3e3e3e;"></div>
<div class="a" style="left:586px;top:407px;width:208px;height:11px;background:#4a4a4a;"></div>
<div class="a" style="left:611px;top:407px;width:183px;height:11px;background:#4f60b4;border-top:1px solid #6474c4"></div>
<div class="a" style="left:0px;top:419px;width:580px;height:13px;background:#373737;"></div>
<div class="a" style="left:0px;top:432px;width:580px;height:1px;background:#454545;"></div>
<div class="a" style="left:0px;top:421px;width:10px;height:10px;background:#454545;border-bottom:1px solid #8a8a8a"></div>
<div class="a" style="left:31px;top:421px;width:9px;height:10px;background:#454545;border-bottom:1px solid #8a8a8a"></div>
<svg style="left:46px;top:423px;" width="5" height="7" viewBox="0 0 5 7"><path d="M0.5 0.5 L4.5 3.5 L0.5 6.5Z" fill="#7a7a7a"/></svg>
<div class="a" style="left:55px;top:421px;width:10px;height:10px;background:#6a84e6;border:1px solid #3a4470"></div>
<div class="t" style="left:69px;top:423px;font-size:8px;color:#c4c4c4;font-weight:bold">3</div>
<svg style="left:91px;top:423px;" width="6" height="6" viewBox="0 0 6 6"><path d="M3 0 L3.8 2.2 L6 2.3 L4.3 3.7 L4.9 6 L3 4.7 L1.1 6 L1.7 3.7 L0 2.3 L2.2 2.2Z" fill="#f0f0f0"/></svg>
<div class="t" style="left:103px;top:422.5px;font-size:8px;color:#e6e6e6;transform:scaleY(1.14);transform-origin:0 0;font-weight:bold">“生3”轮廓 2</div>
<svg style="left:375px;top:422px;" width="9" height="9" viewBox="0 0 9 9"><path d="M0 3.5 L2.5 3.5 M6.5 3.5 L9 3.5" stroke="#ddd" stroke-width="0.8"/><path d="M2.5 1.5 L6.5 1.5 L4.5 4.5Z" fill="#eee"/><rect x="0" y="8" width="9" height="1" fill="#888"/></svg>
<svg style="left:386px;top:422px;" width="8" height="9" viewBox="0 0 8 9"><circle cx="4" cy="4" r="1.8" fill="none" stroke="#bbb" stroke-width="0.8"/><path d="M4 0 L4 1.5 M4 6.5 L4 8 M0 4 L1.5 4 M6.5 4 L8 4 M1.2 1.2 L2.2 2.2 M5.8 5.8 L6.8 6.8 M1.2 6.8 L2.2 5.8 M5.8 2.2 L6.8 1.2" stroke="#bbb" stroke-width="0.6"/><rect x="0" y="8" width="8" height="1" fill="#888"/></svg>
<svg style="left:396px;top:421px;" width="9" height="10" viewBox="0 0 9 10"><path d="M0.8 8.2 L8 1" stroke="#e8e8e8" stroke-width="1.5"/><rect x="0" y="9" width="9" height="1" fill="#888"/></svg>
<div class="t" style="left:406px;top:422px;font-size:10px;color:#d0d0d0;font-family:Liberation Serif;line-height:9px"><i>fx</i></div>
<div class="a" style="left:406px;top:430px;width:9px;height:1px;background:#888;"></div>
<div class="a" style="left:425px;top:421px;width:9px;height:10px;background:#454545;border-bottom:1px solid #8a8a8a"></div>
<div class="a" style="left:435px;top:421px;width:9px;height:10px;background:#454545;border-bottom:1px solid #8a8a8a"></div>
<div class="a" style="left:446px;top:421px;width:9px;height:10px;background:#454545;border-bottom:1px solid #8a8a8a"></div>
<svg style="left:495px;top:421px;" width="9" height="9" viewBox="0 0 9 9"><path d="M5.4 4.6 A1.4 1.4 0 1 1 5.4 4.4 L5.4 6 Q5.6 7.2 6.8 6.6 Q7.9 5.8 7.6 3.6 A3.5 3.5 0 1 0 4.5 7.9" stroke="#cfcfcf" stroke-width="0.95" fill="none"/></svg>
<div class="a" style="left:507px;top:420px;width:60px;height:11px;background:#3d3d3d;border:1px solid #2a2a2a;border-top-color:#464646"></div>
<div class="t" style="left:511px;top:422px;font-size:8.5px;color:#dedede;transform:scaleY(1.14);transform-origin:0 0;">无</div>
<div class="a" style="left:553px;top:421px;width:1px;height:9px;background:#262626;"></div>
<svg style="left:557px;top:424px;" width="6" height="4" viewBox="0 0 6 4"><path d="M0 0 L6 0 L3 4Z" fill="#ccc"/></svg>
<div class="a" style="left:581px;top:419px;width:214px;height:14px;background:#3e3e3e;"></div>
<div class="a" style="left:586px;top:420px;width:208px;height:12px;background:#4a4a4a;"></div>
<div class="a" style="left:598px;top:420px;width:196px;height:12px;background:#4f60b4;border-top:1px solid #6474c4"></div>
<div class="a" style="left:0px;top:433px;width:580px;height:12px;background:#373737;"></div>
<div class="a" style="left:0px;top:445px;width:580px;height:1px;background:#454545;"></div>
<div class="a" style="left:0px;top:434px;width:10px;height:10px;background:#454545;border-bottom:1px solid #8a8a8a"></div>
<div class="a" style="left:31px;top:434px;width:9px;height:10px;background:#454545;border-bottom:1px solid #8a8a8a"></div>
<svg style="left:46px;top:436px;" width="5" height="7" viewBox="0 0 5 7"><path d="M0.5 0.5 L4.5 3.5 L0.5 6.5Z" fill="#7a7a7a"/></svg>
<div class="a" style="left:55px;top:434px;width:10px;height:10px;background:#6a84e6;border:1px solid #3a4470"></div>
<div class="t" style="left:69px;top:436px;font-size:8px;color:#c4c4c4;font-weight:bold">4</div>
<svg style="left:91px;top:436px;" width="6" height="6" viewBox="0 0 6 6"><path d="M3 0 L3.8 2.2 L6 2.3 L4.3 3.7 L4.9 6 L3 4.7 L1.1 6 L1.7 3.7 L0 2.3 L2.2 2.2Z" fill="#f0f0f0"/></svg>
<div class="t" style="left:103px;top:435.5px;font-size:8px;color:#e6e6e6;transform:scaleY(1.14);transform-origin:0 0;font-weight:bold">“生7”轮廓</div>
<svg style="left:375px;top:435px;" width="9" height="9" viewBox="0 0 9 9"><path d="M0 3.5 L2.5 3.5 M6.5 3.5 L9 3.5" stroke="#ddd" stroke-width="0.8"/><path d="M2.5 1.5 L6.5 1.5 L4.5 4.5Z" fill="#eee"/><rect x="0" y="8" width="9" height="1" fill="#888"/></svg>
<svg style="left:386px;top:435px;" width="8" height="9" viewBox="0 0 8 9"><circle cx="4" cy="4" r="1.8" fill="none" stroke="#bbb" stroke-width="0.8"/><path d="M4 0 L4 1.5 M4 6.5 L4 8 M0 4 L1.5 4 M6.5 4 L8 4 M1.2 1.2 L2.2 2.2 M5.8 5.8 L6.8 6.8 M1.2 6.8 L2.2 5.8 M5.8 2.2 L6.8 1.2" stroke="#bbb" stroke-width="0.6"/><rect x="0" y="8" width="8" height="1" fill="#888"/></svg>
<svg style="left:396px;top:434px;" width="9" height="10" viewBox="0 0 9 10"><path d="M0.8 8.2 L8 1" stroke="#e8e8e8" stroke-width="1.5"/><rect x="0" y="9" width="9" height="1" fill="#888"/></svg>
<div class="a" style="left:425px;top:434px;width:9px;height:10px;background:#454545;border-bottom:1px solid #8a8a8a"></div>
<div class="a" style="left:435px;top:434px;width:9px;height:10px;background:#454545;border-bottom:1px solid #8a8a8a"></div>
<div class="a" style="left:446px;top:434px;width:9px;height:10px;background:#454545;border-bottom:1px solid #8a8a8a"></div>
<svg style="left:495px;top:434px;" width="9" height="9" viewBox="0 0 9 9"><path d="M5.4 4.6 A1.4 1.4 0 1 1 5.4 4.4 L5.4 6 Q5.6 7.2 6.8 6.6 Q7.9 5.8 7.6 3.6 A3.5 3.5 0 1 0 4.5 7.9" stroke="#cfcfcf" stroke-width="0.95" fill="none"/></svg>
<div class="a" style="left:507px;top:433px;width:60px;height:11px;background:#3d3d3d;border:1px solid #2a2a2a;border-top-color:#464646"></div>
<div class="t" style="left:511px;top:435px;font-size:8.5px;color:#dedede;transform:scaleY(1.14);transform-origin:0 0;">无</div>
<div class="a" style="left:553px;top:434px;width:1px;height:9px;background:#262626;"></div>
<svg style="left:557px;top:437px;" width="6" height="4" viewBox="0 0 6 4"><path d="M0 0 L6 0 L3 4Z" fill="#ccc"/></svg>
<div class="a" style="left:581px;top:433px;width:214px;height:13px;background:#3e3e3e;"></div>
<div class="a" style="left:586px;top:434px;width:208px;height:11px;background:#4a4a4a;"></div>
<div class="a" style="left:613px;top:434px;width:181px;height:11px;background:#4f60b4;border-top:1px solid #6474c4"></div>
<div class="a" style="left:0px;top:446px;width:580px;height:13px;background:#373737;"></div>
<div class="a" style="left:0px;top:459px;width:580px;height:1px;background:#454545;"></div>
<div class="a" style="left:0px;top:448px;width:10px;height:10px;background:#454545;border-bottom:1px solid #8a8a8a"></div>
<div class="a" style="left:31px;top:448px;width:9px;height:10px;background:#454545;border-bottom:1px solid #8a8a8a"></div>
<svg style="left:46px;top:450px;" width="5" height="7" viewBox="0 0 5 7"><path d="M0.5 0.5 L4.5 3.5 L0.5 6.5Z" fill="#7a7a7a"/></svg>
<div class="a" style="left:55px;top:448px;width:10px;height:10px;background:#6a84e6;border:1px solid #3a4470"></div>
<div class="t" style="left:69px;top:450px;font-size:8px;color:#c4c4c4;font-weight:bold">5</div>
<svg style="left:91px;top:450px;" width="6" height="6" viewBox="0 0 6 6"><path d="M3 0 L3.8 2.2 L6 2.3 L4.3 3.7 L4.9 6 L3 4.7 L1.1 6 L1.7 3.7 L0 2.3 L2.2 2.2Z" fill="#f0f0f0"/></svg>
<div class="t" style="left:103px;top:449.5px;font-size:8px;color:#e6e6e6;transform:scaleY(1.14);transform-origin:0 0;font-weight:bold">“生7”轮廓 2</div>
<svg style="left:375px;top:449px;" width="9" height="9" viewBox="0 0 9 9"><path d="M0 3.5 L2.5 3.5 M6.5 3.5 L9 3.5" stroke="#ddd" stroke-width="0.8"/><path d="M2.5 1.5 L6.5 1.5 L4.5 4.5Z" fill="#eee"/><rect x="0" y="8" width="9" height="1" fill="#888"/></svg>
<svg style="left:386px;top:449px;" width="8" height="9" viewBox="0 0 8 9"><circle cx="4" cy="4" r="1.8" fill="none" stroke="#bbb" stroke-width="0.8"/><path d="M4 0 L4 1.5 M4 6.5 L4 8 M0 4 L1.5 4 M6.5 4 L8 4 M1.2 1.2 L2.2 2.2 M5.8 5.8 L6.8 6.8 M1.2 6.8 L2.2 5.8 M5.8 2.2 L6.8 1.2" stroke="#bbb" stroke-width="0.6"/><rect x="0" y="8" width="8" height="1" fill="#888"/></svg>
<svg style="left:396px;top:448px;" width="9" height="10" viewBox="0 0 9 10"><path d="M0.8 8.2 L8 1" stroke="#e8e8e8" stroke-width="1.5"/><rect x="0" y="9" width="9" height="1" fill="#888"/></svg>
<div class="a" style="left:425px;top:448px;width:9px;height:10px;background:#454545;border-bottom:1px solid #8a8a8a"></div>
<div class="a" style="left:435px;top:448px;width:9px;height:10px;background:#454545;border-bottom:1px solid #8a8a8a"></div>
<div class="a" style="left:446px;top:448px;width:9px;height:10px;background:#454545;border-bottom:1px solid #8a8a8a"></div>
<svg style="left:495px;top:448px;" width="9" height="9" viewBox="0 0 9 9"><path d="M5.4 4.6 A1.4 1.4 0 1 1 5.4 4.4 L5.4 6 Q5.6 7.2 6.8 6.6 Q7.9 5.8 7.6 3.6 A3.5 3.5 0 1 0 4.5 7.9" stroke="#cfcfcf" stroke-width="0.95" fill="none"/></svg>
<div class="a" style="left:507px;top:447px;width:60px;height:11px;background:#3d3d3d;border:1px solid #2a2a2a;border-top-color:#464646"></div>
<div class="t" style="left:511px;top:449px;font-size:8.5px;color:#dedede;transform:scaleY(1.14);transform-origin:0 0;">无</div>
<div class="a" style="left:553px;top:448px;width:1px;height:9px;background:#262626;"></div>
<svg style="left:557px;top:451px;" width="6" height="4" viewBox="0 0 6 4"><path d="M0 0 L6 0 L3 4Z" fill="#ccc"/></svg>
<div class="a" style="left:581px;top:446px;width:214px;height:14px;background:#3e3e3e;"></div>
<div class="a" style="left:586px;top:447px;width:208px;height:12px;background:#4a4a4a;"></div>
<div class="a" style="left:598px;top:447px;width:196px;height:12px;background:#4f60b4;border-top:1px solid #6474c4"></div>
<div class="a" style="left:0px;top:460px;width:580px;height:12px;background:#373737;"></div>
<div class="a" style="left:0px;top:472px;width:580px;height:1px;background:#454545;"></div>
<div class="a" style="left:0px;top:461px;width:10px;height:10px;background:#454545;border-bottom:1px solid #8a8a8a"></div>
<div class="a" style="left:31px;top:461px;width:9px;height:10px;background:#454545;border-bottom:1px solid #8a8a8a"></div>
<svg style="left:46px;top:463px;" width="5" height="7" viewBox="0 0 5 7"><path d="M0.5 0.5 L4.5 3.5 L0.5 6.5Z" fill="#7a7a7a"/></svg>
<div class="a" style="left:55px;top:461px;width:10px;height:10px;background:#6a84e6;border:1px solid #3a4470"></div>
<div class="t" style="left:69px;top:463px;font-size:8px;color:#c4c4c4;font-weight:bold">6</div>
<svg style="left:91px;top:463px;" width="6" height="6" viewBox="0 0 6 6"><path d="M3 0 L3.8 2.2 L6 2.3 L4.3 3.7 L4.9 6 L3 4.7 L1.1 6 L1.7 3.7 L0 2.3 L2.2 2.2Z" fill="#f0f0f0"/></svg>
<div class="t" style="left:103px;top:462.5px;font-size:8px;color:#e6e6e6;transform:scaleY(1.14);transform-origin:0 0;font-weight:bold">“生7”轮廓 3</div>
<svg style="left:375px;top:462px;" width="9" height="9" viewBox="0 0 9 9"><path d="M0 3.5 L2.5 3.5 M6.5 3.5 L9 3.5" stroke="#ddd" stroke-width="0.8"/><path d="M2.5 1.5 L6.5 1.5 L4.5 4.5Z" fill="#eee"/><rect x="0" y="8" width="9" height="1" fill="#888"/></svg>
<svg style="left:386px;top:462px;" width="8" height="9" viewBox="0 0 8 9"><circle cx="4" cy="4" r="1.8" fill="none" stroke="#bbb" stroke-width="0.8"/><path d="M4 0 L4 1.5 M4 6.5 L4 8 M0 4 L1.5 4 M6.5 4 L8 4 M1.2 1.2 L2.2 2.2 M5.8 5.8 L6.8 6.8 M1.2 6.8 L2.2 5.8 M5.8 2.2 L6.8 1.2" stroke="#bbb" stroke-width="0.6"/><rect x="0" y="8" width="8" height="1" fill="#888"/></svg>
<svg style="left:396px;top:461px;" width="9" height="10" viewBox="0 0 9 10"><path d="M0.8 8.2 L8 1" stroke="#e8e8e8" stroke-width="1.5"/><rect x="0" y="9" width="9" height="1" fill="#888"/></svg>
<div class="a" style="left:425px;top:461px;width:9px;height:10px;background:#454545;border-bottom:1px solid #8a8a8a"></div>
<div class="a" style="left:435px;top:461px;width:9px;height:10px;background:#454545;border-bottom:1px solid #8a8a8a"></div>
<div class="a" style="left:446px;top:461px;width:9px;height:10px;background:#454545;border-bottom:1px solid #8a8a8a"></div>
<svg style="left:495px;top:461px;" width="9" height="9" viewBox="0 0 9 9"><path d="M5.4 4.6 A1.4 1.4 0 1 1 5.4 4.4 L5.4 6 Q5.6 7.2 6.8 6.6 Q7.9 5.8 7.6 3.6 A3.5 3.5 0 1 0 4.5 7.9" stroke="#cfcfcf" stroke-width="0.95" fill="none"/></svg>
<div class="a" style="left:507px;top:460px;width:60px;height:11px;background:#3d3d3d;border:1px solid #2a2a2a;border-top-color:#464646"></div>
<div class="t" style="left:511px;top:462px;font-size:8.5px;color:#dedede;transform:scaleY(1.14);transform-origin:0 0;">无</div>
<div class="a" style="left:553px;top:461px;width:1px;height:9px;background:#262626;"></div>
<svg style="left:557px;top:464px;" width="6" height="4" viewBox="0 0 6 4"><path d="M0 0 L6 0 L3 4Z" fill="#ccc"/></svg>
<div class="a" style="left:581px;top:460px;width:214px;height:13px;background:#3e3e3e;"></div>
<div class="a" style="left:586px;top:461px;width:208px;height:11px;background:#4a4a4a;"></div>
<div class="a" style="left:605px;top:461px;width:189px;height:11px;background:#4f60b4;border-top:1px solid #6474c4"></div>
<div class="a" style="left:0px;top:473px;width:580px;height:12px;background:#373737;"></div>
<div class="a" style="left:0px;top:485px;width:580px;height:1px;background:#454545;"></div>
<div class="a" style="left:0px;top:474px;width:10px;height:10px;background:#454545;border-bottom:1px solid #8a8a8a"></div>
<div class="a" style="left:31px;top:474px;width:9px;height:10px;background:#454545;border-bottom:1px solid #8a8a8a"></div>
<svg style="left:46px;top:476px;" width="5" height="7" viewBox="0 0 5 7"><path d="M0.5 0.5 L4.5 3.5 L0.5 6.5Z" fill="#7a7a7a"/></svg>
<div class="a" style="left:55px;top:474px;width:10px;height:10px;background:#6a84e6;border:1px solid #3a4470"></div>
<div class="t" style="left:69px;top:476px;font-size:8px;color:#c4c4c4;font-weight:bold">7</div>
<svg style="left:91px;top:476px;" width="6" height="6" viewBox="0 0 6 6"><path d="M3 0 L3.8 2.2 L6 2.3 L4.3 3.7 L4.9 6 L3 4.7 L1.1 6 L1.7 3.7 L0 2.3 L2.2 2.2Z" fill="#f0f0f0"/></svg>
<div class="t" style="left:103px;top:475.5px;font-size:8px;color:#e6e6e6;transform:scaleY(1.14);transform-origin:0 0;font-weight:bold">“生6”轮廓</div>
<svg style="left:375px;top:475px;" width="9" height="9" viewBox="0 0 9 9"><path d="M0 3.5 L2.5 3.5 M6.5 3.5 L9 3.5" stroke="#ddd" stroke-width="0.8"/><path d="M2.5 1.5 L6.5 1.5 L4.5 4.5Z" fill="#eee"/><rect x="0" y="8" width="9" height="1" fill="#888"/></svg>
<svg style="left:386px;top:475px;" width="8" height="9" viewBox="0 0 8 9"><circle cx="4" cy="4" r="1.8" fill="none" stroke="#bbb" stroke-width="0.8"/><path d="M4 0 L4 1.5 M4 6.5 L4 8 M0 4 L1.5 4 M6.5 4 L8 4 M1.2 1.2 L2.2 2.2 M5.8 5.8 L6.8 6.8 M1.2 6.8 L2.2 5.8 M5.8 2.2 L6.8 1.2" stroke="#bbb" stroke-width="0.6"/><rect x="0" y="8" width="8" height="1" fill="#888"/></svg>
<svg style="left:396px;top:474px;" width="9" height="10" viewBox="0 0 9 10"><path d="M0.8 8.2 L8 1" stroke="#e8e8e8" stroke-width="1.5"/><rect x="0" y="9" width="9" height="1" fill="#888"/></svg>
<div class="a" style="left:425px;top:474px;width:9px;height:10px;background:#454545;border-bottom:1px solid #8a8a8a"></div>
<div class="a" style="left:435px;top:474px;width:9px;height:10px;background:#454545;border-bottom:1px solid #8a8a8a"></div>
<div class="a" style="left:446px;top:474px;width:9px;height:10px;background:#454545;border-bottom:1px solid #8a8a8a"></div>
<svg style="left:495px;top:474px;" width="9" height="9" viewBox="0 0 9 9"><path d="M5.4 4.6 A1.4 1.4 0 1 1 5.4 4.4 L5.4 6 Q5.6 7.2 6.8 6.6 Q7.9 5.8 7.6 3.6 A3.5 3.5 0 1 0 4.5 7.9" stroke="#cfcfcf" stroke-width="0.95" fill="none"/></svg>
<div class="a" style="left:507px;top:473px;width:60px;height:11px;background:#3d3d3d;border:1px solid #2a2a2a;border-top-color:#464646"></div>
<div class="t" style="left:511px;top:475px;font-size:8.5px;color:#dedede;transform:scaleY(1.14);transform-origin:0 0;">无</div>
<div class="a" style="left:553px;top:474px;width:1px;height:9px;background:#262626;"></div>
<svg style="left:557px;top:477px;" width="6" height="4" viewBox="0 0 6 4"><path d="M0 0 L6 0 L3 4Z" fill="#ccc"/></svg>
<div class="a" style="left:581px;top:473px;width:214px;height:13px;background:#3e3e3e;"></div>
<div class="a" style="left:586px;top:474px;width:208px;height:11px;background:#4a4a4a;"></div>
<div class="a" style="left:611px;top:474px;width:183px;height:11px;background:#4f60b4;border-top:1px solid #6474c4"></div>
<div class="a" style="left:0px;top:486px;width:580px;height:13px;background:#373737;"></div>
<div class="a" style="left:0px;top:499px;width:580px;height:1px;background:#454545;"></div>
<div class="a" style="left:0px;top:488px;width:10px;height:10px;background:#454545;border-bottom:1px solid #8a8a8a"></div>
<div class="a" style="left:31px;top:488px;width:9px;height:10px;background:#454545;border-bottom:1px solid #8a8a8a"></div>
<svg style="left:46px;top:490px;" width="5" height="7" viewBox="0 0 5 7"><path d="M0.5 0.5 L4.5 3.5 L0.5 6.5Z" fill="#7a7a7a"/></svg>
<div class="a" style="left:55px;top:488px;width:10px;height:10px;background:#6a84e6;border:1px solid #3a4470"></div>
<div class="t" style="left:69px;top:490px;font-size:8px;color:#c4c4c4;font-weight:bold">8</div>
<svg style="left:91px;top:490px;" width="6" height="6" viewBox="0 0 6 6"><path d="M3 0 L3.8 2.2 L6 2.3 L4.3 3.7 L4.9 6 L3 4.7 L1.1 6 L1.7 3.7 L0 2.3 L2.2 2.2Z" fill="#f0f0f0"/></svg>
<div class="t" style="left:103px;top:489.5px;font-size:8px;color:#e6e6e6;transform:scaleY(1.14);transform-origin:0 0;font-weight:bold">“生6”轮廓 2</div>
<svg style="left:375px;top:489px;" width="9" height="9" viewBox="0 0 9 9"><path d="M0 3.5 L2.5 3.5 M6.5 3.5 L9 3.5" stroke="#ddd" stroke-width="0.8"/><path d="M2.5 1.5 L6.5 1.5 L4.5 4.5Z" fill="#eee"/><rect x="0" y="8" width="9" height="1" fill="#888"/></svg>
<svg style="left:386px;top:489px;" width="8" height="9" viewBox="0 0 8 9"><circle cx="4" cy="4" r="1.8" fill="none" stroke="#bbb" stroke-width="0.8"/><path d="M4 0 L4 1.5 M4 6.5 L4 8 M0 4 L1.5 4 M6.5 4 L8 4 M1.2 1.2 L2.2 2.2 M5.8 5.8 L6.8 6.8 M1.2 6.8 L2.2 5.8 M5.8 2.2 L6.8 1.2" stroke="#bbb" stroke-width="0.6"/><rect x="0" y="8" width="8" height="1" fill="#888"/></svg>
<svg style="left:396px;top:488px;" width="9" height="10" viewBox="0 0 9 10"><path d="M0.8 8.2 L8 1" stroke="#e8e8e8" stroke-width="1.5"/><rect x="0" y="9" width="9" height="1" fill="#888"/></svg>
<div class="t" style="left:406px;top:489px;font-size:10px;color:#d0d0d0;font-family:Liberation Serif;line-height:9px"><i>fx</i></div>
<div class="a" style="left:406px;top:497px;width:9px;height:1px;background:#888;"></div>
<div class="a" style="left:425px;top:488px;width:9px;height:10px;background:#454545;border-bottom:1px solid #8a8a8a"></div>
<div class="a" style="left:435px;top:488px;width:9px;height:10px;background:#454545;border-bottom:1px solid #8a8a8a"></div>
<div class="a" style="left:446px;top:488px;width:9px;height:10px;background:#454545;border-bottom:1px solid #8a8a8a"></div>
<svg style="left:495px;top:488px;" width="9" height="9" viewBox="0 0 9 9"><path d="M5.4 4.6 A1.4 1.4 0 1 1 5.4 4.4 L5.4 6 Q5.6 7.2 6.8 6.6 Q7.9 5.8 7.6 3.6 A3.5 3.5 0 1 0 4.5 7.9" stroke="#cfcfcf" stroke-width="0.95" fill="none"/></svg>
<div class="a" style="left:507px;top:487px;width:60px;height:11px;background:#3d3d3d;border:1px solid #2a2a2a;border-top-color:#464646"></div>
<div class="t" style="left:511px;top:489px;font-size:8.5px;color:#dedede;transform:scaleY(1.14);transform-origin:0 0;">无</div>
<div class="a" style="left:553px;top:488px;width:1px;height:9px;background:#262626;"></div>
<svg style="left:557px;top:491px;" width="6" height="4" viewBox="0 0 6 4"><path d="M0 0 L6 0 L3 4Z" fill="#ccc"/></svg>
<div class="a" style="left:581px;top:486px;width:214px;height:14px;background:#3e3e3e;"></div>
<div class="a" style="left:586px;top:487px;width:208px;height:12px;background:#4a4a4a;"></div>
<div class="a" style="left:605px;top:487px;width:189px;height:12px;background:#4f60b4;border-top:1px solid #6474c4"></div>
<div class="a" style="left:584px;top:378px;width:1px;height:122px;background:#b83030;"></div>
<div class="a" style="left:585px;top:378px;width:1px;height:122px;background:#702828;"></div>
<svg style="left:580px;top:366px;" width="10" height="12" viewBox="0 0 10 12"><path d="M1 0.5 L9 0.5 L9.5 5.5 L5 11.5 L0.5 5.5Z" fill="#dcae2c"/><path d="M3 3 L7 3 M3.5 5 L6.5 5" stroke="#7a5a18" stroke-width="0.8"/></svg>
</body></html>
